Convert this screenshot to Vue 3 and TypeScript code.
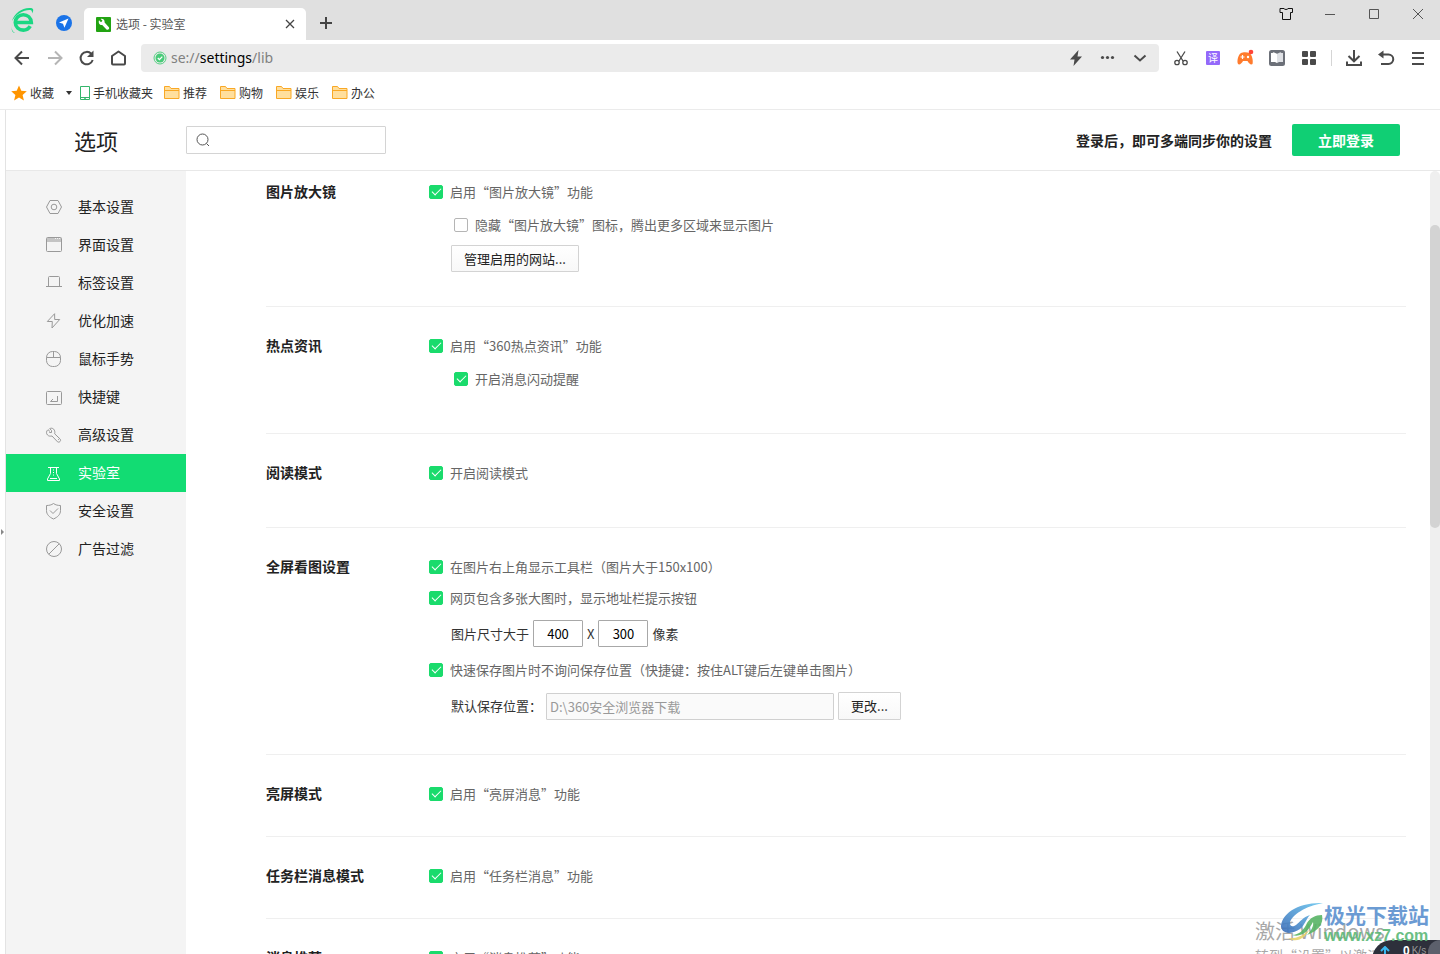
<script setup lang="ts">
import { ref } from 'vue'

interface NavItem {
  label: string
  d: string
  band?: string
}

const bookmarks = ['推荐', '购物', '娱乐', '办公']

const navItems: NavItem[] = [
  { label: '基本设置', d: 'M1.5 9 5 2.5h8L16.5 9 13 15.5H5zM9 6.2a2.8 2.8 0 1 0 0 5.6 2.8 2.8 0 0 0 0-5.6z' },
  { label: '界面设置', d: 'M2.5 1.5h13a1 1 0 0 1 1 1v12a1 1 0 0 1-1 1h-13a1 1 0 0 1-1-1v-12a1 1 0 0 1 1-1z', band: 'M2 2h8v1H2zM11 2h1v1h-1zM13 2h1v1h-1zM15 2h1v1h-1zM2 3h14v3H2z' },
  { label: '标签设置', d: 'M3.5 12V3.5a1 1 0 0 1 1-1h9a1 1 0 0 1 1 1V12M1 12.5h16' },
  { label: '优化加速', d: 'M9.6 1.7 2.3 9.5h5L7 16l7.7-8.5h-5z' },
  { label: '鼠标手势', d: 'M7.5 1.5h2a6 6 0 0 1 6 6v3a6 6 0 0 1-6 6h-2a6 6 0 0 1-6-6v-3a6 6 0 0 1 6-6zM1.5 7.5h14M8.5 1.5v6' },
  { label: '快捷键', d: 'M2.5 3.5h13a1 1 0 0 1 1 1v11a1 1 0 0 1-1 1h-13a1 1 0 0 1-1-1v-11a1 1 0 0 1 1-1zM12.5 8v5.500H5.500l2.500-2.500' },
  { label: '高级设置', d: 'M5 5.500 3 3.700C1.200 5 1 7.500 2.500 9c1.300 1.300 2.800 1.300 4.500 1l5.500 5.800c1.800 1.200 4-1 2.700-2.700L9.700 7.800c.4-1.800 0-3.500-1-4.600-1.200-1.200-2.700-1.200-4-.6L6.500 4.500v2H4.300M13 13.500h.8' },
  { label: '实验室', d: 'M3 3.500h11M5.500 3.500v6L2.500 15v1.500h12V15l-3-5.500v-6M8.500 5.500v1M8.500 8v1M8.500 10.500v1M5 14.500h7' },
  { label: '安全设置', d: 'M8.5 1.5c2 1.500 4.500 2 7 2v5c0 4-2.700 6.500-7 8.500-4.300-2-7-4.500-7-8.500v-5c2.500 0 5-.5 7-2zM5 8.500l3 3 5-5' },
  { label: '广告过滤', d: 'M9 1.500a7.500 7.500 0 1 0 0 15 7.500 7.500 0 0 0 0-15zM3.700 14.300 14.300 3.700' },
]

const activeNav = ref('实验室')
const query = ref('')
const address = ref({ scheme: 'se://', host: 'settings', path: '/lib' })

const magnifier = ref(true)
const hideMagnifier = ref(false)
const hotNews = ref(true)
const flashNews = ref(true)
const readMode = ref(true)
const imageToolbar = ref(true)
const imageHint = ref(true)
const quickSave = ref(true)
const screenMessage = ref(true)
const taskbarMessage = ref(true)
const recommend = ref(true)
const minWidth = ref('400')
const minHeight = ref('300')
const savePath = ref('D:\\360安全浏览器下载')
</script>

<template>
  <div class="browser" lang="zh-CN">
    <header class="titlebar">
      <svg class="logo" viewBox="0 0 26 28" aria-hidden="true">
        <path d="M5.500 15.500H21.300C21 10.500 17.500 7.700 13.300 7.700c-4.500 0-8 3.400-8 7.800s3.500 7.600 8 7.600c3 0 5.500-1.500 6.900-4" fill="none" stroke="#1bd783" stroke-width="3.600" />
        <path d="M2 14C4 6 13 0 21 1c3 .5 2.600 3 1 5.500.3-2-.3-3.300-2-3.500C14 2.600 6 7 2 14zM2.500 17c-1.500 4-.5 7.500 2.500 9C2 25.700.8 22.500 2.500 17z" fill="#1bd783" />
      </svg>
      <button class="pinned" aria-label="导航">
        <svg viewBox="0 0 16 16"><circle cx="8" cy="8" r="8" fill="#1a73e8" /><path d="M12.500 3.500 3 7.600l4 1.200 1.400 4z" fill="#fff" /></svg>
      </button>
      <div class="tab">
        <svg class="favicon" viewBox="0 0 15 15" aria-hidden="true">
          <rect width="15" height="15" rx="1" fill="#22a312" />
          <path d="M3 3.200 5 5.200l1.500-1.400L4.700 2C7 1.400 9 3 8.600 5.600l4.300 4.600c1 1.500-1 3.300-2.400 2.300L6.200 8C4 8.500 2 6 3 3.200z" fill="#fff" />
        </svg>
        <span class="tab-title">选项 - 实验室</span>
        <button class="tab-close" aria-label="关闭标签页">
          <svg viewBox="0 0 10 10"><path d="m1 1 8 8M9 1 1 9" /></svg>
        </button>
      </div>
      <button class="new-tab" aria-label="新建标签页">
        <svg viewBox="0 0 12 12"><path d="M6 0v12M0 6h12" /></svg>
      </button>
      <div class="window-buttons">
        <button aria-label="皮肤"><svg class="dark" viewBox="0 0 16 16"><path d="M2 2.500h4c.5 1.300 3.500 1.300 4 0h4.500v4H12.500v7h-8v-7H2z" /></svg></button>
        <button aria-label="最小化"><svg viewBox="0 0 16 16"><path d="M3 8.500h10" /></svg></button>
        <button aria-label="最大化"><svg viewBox="0 0 16 16"><path d="M3.500 3.500h9v9h-9z" /></svg></button>
        <button aria-label="关闭"><svg viewBox="0 0 16 16"><path d="m3 3 10 10M13 3 3 13" /></svg></button>
      </div>
    </header>

    <div class="toolbar">
      <button class="tool" aria-label="后退"><svg viewBox="0 0 18 18"><path d="M16 9H3M9 2.500 2.500 9 9 15.500" /></svg></button>
      <button class="tool faded" aria-label="前进"><svg viewBox="0 0 18 18"><path d="M3 9h13M10 2.500 16.500 9 10 15.500" /></svg></button>
      <button class="tool" aria-label="刷新"><svg viewBox="0 0 18 18"><path d="M15.700 11A6.200 6.200 0 1 1 14.300 4.800" /><path class="solid" d="M16.500 1.500v6.500H10z" /></svg></button>
      <button class="tool" aria-label="主页"><svg viewBox="0 0 18 18"><path d="M4 15.500q-1 0-1-1V7L9.500 2.500 16 7v7.500q0 1-1 1z" stroke-linejoin="round" /></svg></button>
      <div class="address">
        <svg class="shield" viewBox="0 0 14 14" aria-hidden="true">
          <circle cx="7" cy="7" r="6" fill="none" stroke="#56cf83" stroke-width="1" />
          <circle cx="7" cy="7" r="4.500" fill="#49cc79" />
          <path d="m4.800 7 1.600 1.600 2.900-3" fill="none" stroke="#fff" stroke-width="1.300" />
        </svg>
        <span class="url">{{ address.scheme }}<b>{{ address.host }}</b>{{ address.path }}</span>
        <button class="tool" aria-label="极速模式"><svg viewBox="0 0 18 18"><path class="solid" d="M11.500 1 3 10.500h4.500L6.500 17 15 7.500h-4.500z" /></svg></button>
        <button class="tool" aria-label="更多"><svg viewBox="0 0 18 18"><circle class="solid" cx="3.500" cy="8.500" r="1.600" /><circle class="solid" cx="8.500" cy="8.500" r="1.600" /><circle class="solid" cx="13.500" cy="8.500" r="1.600" /></svg></button>
        <button class="tool" aria-label="展开"><svg viewBox="0 0 18 18"><path d="m3.500 6.500 5.500 5 5.500-5" /></svg></button>
      </div>
      <button class="tool" aria-label="截图"><svg class="thin" viewBox="0 0 18 18"><path d="m5 2.500 6 9.500M13 2.500 7 12" /><circle cx="5" cy="13.500" r="2.200" /><circle cx="13" cy="13.500" r="2.200" /></svg></button>
      <button class="tool" aria-label="翻译"><span class="translate">译</span></button>
      <button class="tool" aria-label="游戏">
        <svg viewBox="0 0 18 18"><path d="M5 4c2-1 6-1 8.500 0 2.500 1.500 4 8 3 11-1.500 1.500-4-1-5-3H7c-1 2-3.500 4.500-5 3C.5 12 2.500 5 5 4z" fill="#ff7b2d" stroke="none" /><path d="M6.500 6v4M4.500 8h4" stroke="#fff" stroke-width="1.200" /><circle cx="12" cy="8" r="1.200" fill="#fff" stroke="none" /><circle cx="15" cy="3" r="2.300" fill="#ff4438" stroke="none" /></svg>
      </button>
      <button class="tool" aria-label="阅读">
        <svg viewBox="0 0 18 18"><rect x="1" y="1" width="16" height="16" rx="2.500" fill="#6c7078" stroke="none" /><path d="M3 4h1.500l1-.8L9 4.800V14l-2-1H3z" fill="#fff" stroke="none" /><path d="M15 4h-1.500l-1-.8L9 4.800V14l2-1h4z" fill="#dfe1e5" stroke="none" /></svg>
      </button>
      <button class="tool" aria-label="扩展"><svg viewBox="0 0 18 18"><path class="solid" d="M3 2h4a1 1 0 0 1 1 1v4a1 1 0 0 1-1 1H3a1 1 0 0 1-1-1V3a1 1 0 0 1 1-1zM11 2h4a1 1 0 0 1 1 1v4a1 1 0 0 1-1 1h-4a1 1 0 0 1-1-1V3a1 1 0 0 1 1-1zM3 10h4a1 1 0 0 1 1 1v4a1 1 0 0 1-1 1H3a1 1 0 0 1-1-1v-4a1 1 0 0 1 1-1zM11 10h4a1 1 0 0 1 1 1v4a1 1 0 0 1-1 1h-4a1 1 0 0 1-1-1v-4a1 1 0 0 1 1-1z" /></svg></button>
      <span class="divider"></span>
      <button class="tool" aria-label="下载"><svg viewBox="0 0 18 18"><path d="M9 1v11M3.500 7 9 12.300 14.500 7M2 12.500V16h14v-3.500" /></svg></button>
      <button class="tool" aria-label="恢复"><svg viewBox="0 0 18 18"><path d="M3 5.500h8.500a4.700 4.700 0 0 1 0 9.500H4" /><path class="solid" d="M6.500 1.500v8L1 5.500z" /></svg></button>
      <button class="tool" aria-label="菜单"><svg viewBox="0 0 18 18"><path d="M3 4h12M3 9h12M3 15h12" /></svg></button>
    </div>

    <nav class="bookmarks" aria-label="收藏栏">
      <a class="bookmark" href="#">
        <svg viewBox="0 0 16 16"><path d="m8 .5 2.300 5.200 5.500.6-4.200 3.700 1.300 5.500L8 12.600l-4.900 2.900L4.400 10 .2 6.300l5.500-.6z" fill="#ff9500" /></svg>收藏
      </a>
      <button class="caret" aria-label="展开收藏"></button>
      <a class="bookmark phone" href="#">
        <svg viewBox="0 0 12 16"><path d="M1.500 1.500h9v13h-9zM1 12.500h10" fill="none" stroke="#34b66b" /><path d="M5 13.200h2v.8H5z" fill="#34b66b" /></svg>手机收藏夹
      </a>
      <a v-for="name in bookmarks" :key="name" class="bookmark" href="#">
        <svg viewBox="0 0 16 16"><path d="M.5 13.500v-12h5l1.500 2h8v10z" fill="#ffdf9e" stroke="#f9a825" /><path d="M1 5.500h14" stroke="#f9a825" /></svg>{{ name }}
      </a>
    </nav>

    <div class="page">
      <button class="side-handle" aria-label="展开侧栏"><span></span></button>
      <div class="settings">
        <header class="settings-head">
          <h1>选项</h1>
          <label class="search">
            <svg viewBox="0 0 14 14" aria-hidden="true"><circle cx="6.500" cy="6.500" r="5.500" /><path d="m10.500 10.500 2.500 2.500" /></svg>
            <input v-model="query" type="text" aria-label="搜索设置" />
          </label>
          <p class="sync">登录后，即可多端同步你的设置</p>
          <button class="login">立即登录</button>
        </header>

        <div class="settings-body">
          <nav class="sidebar" aria-label="设置分类">
            <a v-for="item in navItems" :key="item.label" href="#" :class="{ active: item.label === activeNav }" @click.prevent="activeNav = item.label">
              <svg viewBox="0 0 18 18" aria-hidden="true"><path v-if="item.band" class="band" :d="item.band" /><path :d="item.d" /></svg>
              <span>{{ item.label }}</span>
            </a>
          </nav>

          <main class="content">
            <section class="scrolled">
              <h2>图片放大镜</h2>
              <div class="options">
                <label class="check"><input v-model="magnifier" type="checkbox" />启用“图片放大镜”功能</label>
                <label class="check nested"><input v-model="hideMagnifier" type="checkbox" />隐藏“图片放大镜”图标，腾出更多区域来显示图片</label>
                <div class="sub close"><button class="plain manage">管理启用的网站...</button></div>
              </div>
            </section>
            <section class="roomy">
              <h2>热点资讯</h2>
              <div class="options">
                <label class="check"><input v-model="hotNews" type="checkbox" />启用“360热点资讯”功能</label>
                <label class="check nested"><input v-model="flashNews" type="checkbox" />开启消息闪动提醒</label>
              </div>
            </section>
            <section class="roomy">
              <h2>阅读模式</h2>
              <div class="options">
                <label class="check"><input v-model="readMode" type="checkbox" />开启阅读模式</label>
              </div>
            </section>
            <section>
              <h2>全屏看图设置</h2>
              <div class="options dense">
                <label class="check"><input v-model="imageToolbar" type="checkbox" />在图片右上角显示工具栏（图片大于150x100）</label>
                <label class="check"><input v-model="imageHint" type="checkbox" />网页包含多张大图时，显示地址栏提示按钮</label>
                <div class="sub">
                  <label for="min-width">图片尺寸大于</label>
                  <input id="min-width" v-model="minWidth" class="size" type="text" />
                  <label for="min-height">X</label>
                  <input id="min-height" v-model="minHeight" class="size" type="text" aria-label="高度" />
                  <span>像素</span>
                </div>
                <label class="check"><input v-model="quickSave" type="checkbox" />快速保存图片时不询问保存位置（快捷键：按住ALT键后左键单击图片）</label>
                <div class="sub">
                  <label for="save-path">默认保存位置：</label>
                  <input id="save-path" v-model="savePath" class="path" type="text" disabled />
                  <button class="plain change">更改...</button>
                </div>
              </div>
            </section>
            <section>
              <h2>亮屏模式</h2>
              <div class="options">
                <label class="check"><input v-model="screenMessage" type="checkbox" />启用“亮屏消息”功能</label>
              </div>
            </section>
            <section>
              <h2>任务栏消息模式</h2>
              <div class="options">
                <label class="check"><input v-model="taskbarMessage" type="checkbox" />启用“任务栏消息”功能</label>
              </div>
            </section>
            <section>
              <h2>消息推荐</h2>
              <div class="options">
                <label class="check"><input v-model="recommend" type="checkbox" />启用“消息推荐”功能</label>
              </div>
            </section>
          </main>
          <div class="scrollbar"><span></span></div>
        </div>
      </div>
    </div>

    <div class="activation">
      <strong>激活 Windows</strong>
      <span>转到“设置”以激活 Windows。</span>
    </div>
    <div class="netspeed">
      <svg viewBox="0 0 10 10" aria-hidden="true"><path d="M5 10V2M1 5l4-4 4 4" /></svg>
      <b>0</b><span>K/s</span><i></i>
    </div>
    <div class="site-mark">
      <svg viewBox="0 0 44 40" aria-hidden="true">
        <defs>
          <linearGradient id="swirl" x1="0" y1="1" x2="1" y2="0">
            <stop offset="0" stop-color="#3a6cb8" />
            <stop offset="1" stop-color="#6bc8f0" />
          </linearGradient>
        </defs>
        <path d="M1 25C1 12 18 0 43 1 26 4 11 13 10 21c0 4 3 4 6 2 4-3 7-8 14-10-4 4-5 10-10 14-7 5-17 6-19-2z" fill="url(#swirl)" />
        <path d="M12 33c7 0 12-5 15-12 3-5 8-8 15-8 2 9-4 16-15 20 4-4 7-9 6-13-4 8-11 16-21 13z" fill="#58b465" />
        <path d="M8 36c7 1 15-2 21-8-3 7-12 14-21 8z" fill="#e7d36a" />
      </svg>
      <div><strong>极光下载站</strong><span>www.xz7.com</span></div>
    </div>
  </div>
</template>

<style>
html,
body,
#app {
  height: 100%;
}
body {
  margin: 0;
  overflow: hidden;
}
</style>

<style scoped>
* {
  box-sizing: border-box;
}
.browser {
  position: relative;
  display: flex;
  flex-direction: column;
  height: 100vh;
  overflow: hidden;
  background: #fff;
  color: #222;
  font-family: "Noto Sans CJK SC", "Liberation Sans", sans-serif;
  font-size: 13px;
  line-height: 20px;
}
button {
  padding: 0;
  border: 0;
  background: none;
  color: inherit;
  font: inherit;
}
input {
  margin: 0;
  font: inherit;
}
a {
  color: inherit;
  text-decoration: none;
}
svg {
  display: block;
  flex: none;
}
h1,
h2,
p {
  margin: 0;
}

.titlebar {
  display: flex;
  flex: none;
  height: 40px;
  padding-left: 10px;
  background: #e0e0e0;
}
.logo {
  width: 26px;
  height: 28px;
  margin-top: 7px;
}
.pinned {
  width: 16px;
  height: 16px;
  margin: 15px 12px 0 20px;
}
.tab {
  display: flex;
  align-items: center;
  width: 222px;
  margin-top: 8px;
  padding: 0 11px 0 12px;
  border-radius: 5px 5px 0 0;
  background: #fff;
  color: #555;
  font-size: 12px;
}
.favicon {
  width: 15px;
  height: 15px;
}
.tab-title {
  flex: 1;
  margin-left: 5px;
}
.tab-close,
.tab-close svg {
  width: 10px;
  height: 10px;
}
.tab-close path,
.new-tab path {
  fill: none;
  stroke: #444;
  stroke-width: 1.3;
}
.new-tab {
  width: 40px;
  padding-bottom: 5px;
}
.new-tab path {
  stroke-width: 2;
}
.new-tab svg {
  width: 12px;
  height: 12px;
  margin: 10px auto 0;
}
.window-buttons {
  display: flex;
  margin-left: auto;
}
.window-buttons button {
  display: grid;
  place-items: center;
  width: 44px;
  height: 28px;
}
.window-buttons svg {
  width: 16px;
  height: 16px;
  fill: none;
  stroke: #555;
}
.window-buttons .dark {
  stroke: #111;
}

.toolbar {
  display: flex;
  flex: none;
  align-items: center;
  height: 36px;
  padding: 0 6px;
}
.tool {
  display: grid;
  place-items: center;
  flex: none;
  width: 32px;
  height: 28px;
  color: #4a4a4a;
}
.tool svg {
  width: 18px;
  height: 18px;
  fill: none;
  stroke: currentColor;
  stroke-width: 2;
}
.tool .thin {
  stroke-width: 1.3;
}
.tool .solid {
  fill: currentColor;
  stroke: none;
}
.faded {
  color: #b5b5b5;
}
.address {
  display: flex;
  flex: 1;
  align-items: center;
  height: 28px;
  margin: 0 6px 0 7px;
  padding: 0 3px 0 12px;
  border-radius: 4px;
  background: #ebebeb;
}
.shield {
  width: 14px;
  height: 14px;
}
.url {
  flex: 1;
  margin-left: 4px;
  color: #808080;
  font-family: "Noto Sans", sans-serif;
  font-size: 14px;
}
.url b {
  color: #000;
  font-weight: 400;
}
.translate {
  width: 14px;
  height: 14px;
  border-radius: 1px;
  background: #9469fa;
  color: #fff;
  font-size: 10px;
  line-height: 14px;
}
.divider {
  width: 1px;
  height: 16px;
  margin: 0 6px;
  background: #d5d5d5;
}

.bookmarks {
  display: flex;
  flex: none;
  align-items: center;
  gap: 13px;
  height: 34px;
  padding-left: 11px;
  border-bottom: 1px solid #ebebeb;
  color: #333;
  font-size: 12px;
}
.bookmark {
  display: flex;
  align-items: center;
  gap: 3px;
}
.bookmark svg {
  width: 16px;
  height: 16px;
  fill: none;
}
.phone {
  gap: 2px;
  margin: 0 -2px 0 -6px;
}
.phone svg {
  width: 12px;
}
.caret {
  margin-left: -1px;
  border: 3px solid transparent;
  border-top: 4px solid #333;
  border-bottom: 0;
}

.page {
  display: flex;
  flex: 1;
  min-height: 0;
}
.side-handle {
  display: flex;
  align-items: center;
  width: 6px;
  border-right: 1px solid #e3e3e3;
}
.side-handle span {
  margin-left: 1px;
  border: 3px solid transparent;
  border-right: 0;
  border-left: 3px solid #888;
}
.settings {
  display: flex;
  flex: 1;
  flex-direction: column;
  min-width: 0;
}
.settings-head {
  display: flex;
  flex: none;
  align-items: center;
  height: 61px;
  padding-right: 40px;
  border-bottom: 1px solid #e8e8e8;
}
h1 {
  width: 180px;
  font-size: 22px;
  font-weight: 400;
  line-height: 32px;
  text-align: center;
}
.search {
  display: flex;
  align-items: center;
  width: 200px;
  height: 28px;
  padding-left: 9px;
  border: 1px solid #d4d4d4;
  border-radius: 1px;
}
.search svg {
  width: 14px;
  height: 14px;
  fill: none;
  stroke: #555;
}
.search input {
  flex: 1;
  min-width: 0;
  border: 0;
  outline: 0;
  background: none;
}
.sync {
  margin-left: auto;
  font-size: 14px;
  font-weight: 700;
}
.login {
  width: 108px;
  height: 32px;
  margin-left: 20px;
  border-radius: 2px;
  background: #10cf74;
  color: #fff;
  font-size: 14px;
  font-weight: 700;
}

.settings-body {
  display: flex;
  flex: 1;
  min-height: 0;
}
.sidebar {
  flex: none;
  width: 180px;
  padding-top: 17px;
  background: #f4f4f4;
  font-size: 14px;
}
.sidebar a {
  display: flex;
  align-items: center;
  gap: 15px;
  height: 38px;
  padding-left: 39px;
}
.sidebar span {
  padding-bottom: 2px;
}
.sidebar svg {
  width: 18px;
  height: 18px;
  fill: none;
  stroke: #999;
}
.sidebar .band {
  fill: #c4c4c4;
  stroke: none;
}
.sidebar .active {
  background: #12dc73;
  color: #fff;
}
.sidebar .active svg {
  stroke: #fff;
}

.content {
  flex: 1;
  min-width: 0;
  padding: 0 24px 0 80px;
  overflow: hidden;
}
section {
  display: flex;
  padding: 29px 0 32px;
  border-bottom: 1px solid #efefef;
}
.scrolled {
  padding-top: 11px;
}
.roomy {
  padding-bottom: 44px;
}
h2 {
  width: 163px;
  font-size: 14px;
  font-weight: 700;
  line-height: 18px;
}
.options {
  display: flex;
  flex: 1;
  flex-direction: column;
  align-items: flex-start;
  gap: 13px;
}
.dense {
  gap: 11px;
}
.check {
  display: flex;
  align-items: center;
  gap: 7px;
  color: #666;
}
.check input {
  display: grid;
  place-items: center;
  width: 14px;
  height: 14px;
  border: 1px solid #b5b5b5;
  border-radius: 2px;
  background: #fff;
  appearance: none;
}
.check input:checked {
  border-color: #1adb6c;
  background: #1adb6c;
}
.check input:checked::after {
  width: 9px;
  height: 5px;
  margin-bottom: 3px;
  border: solid #fff;
  border-width: 0 0 1px 1px;
  box-sizing: border-box;
  content: "";
  transform: rotate(-45deg);
}
.nested {
  padding-left: 25px;
}
.sub {
  display: flex;
  align-items: center;
  gap: 4px;
  margin: 1px 0 2px;
  padding-left: 22px;
  color: #333;
}
.close {
  margin-top: -3px;
}
.plain {
  height: 27px;
  border: 1px solid #d3d3d3;
  border-radius: 1px;
  background: linear-gradient(#fff, #f8f8f8);
  color: #222;
}
.manage {
  width: 128px;
}
.change {
  width: 63px;
  height: 28px;
}
.size {
  width: 50px;
  height: 27px;
  padding: 0;
  border: 1px solid #a8a8a8;
  border-radius: 1px;
  color: #000;
  text-align: center;
}
.path {
  width: 288px;
  height: 27px;
  padding: 0 3px;
  border: 1px solid #d0d0d0;
  border-radius: 1px;
  background: #fafafa;
  color: #999;
}
.scrollbar {
  width: 10px;
  padding-top: 54px;
  border-radius: 5px 5px 0 0;
  background: #efefef;
}
.scrollbar span {
  display: block;
  height: 303px;
  border-radius: 5px;
  background: #d3d3d3;
}

.activation {
  position: absolute;
  bottom: -12px;
  right: 0;
  width: 185px;
  color: #a8a8a8;
  white-space: nowrap;
  pointer-events: none;
}
.activation strong {
  display: block;
  font-size: 20px;
  font-weight: 400;
  line-height: 28px;
}
.activation span {
  font-size: 14px;
}
.netspeed {
  position: absolute;
  right: 0;
  bottom: -8px;
  display: flex;
  align-items: center;
  gap: 2px;
  width: 68px;
  height: 22px;
  padding-left: 8px;
  border-radius: 20px 0 0 0;
  background: #2d303b;
  color: #999;
  font-family: "Liberation Sans", sans-serif;
  font-size: 10px;
}
.netspeed svg {
  width: 10px;
  height: 10px;
  fill: none;
  stroke: #39b8f1;
  stroke-width: 2;
}
.netspeed b {
  margin-left: 11px;
  color: #fff;
  font-size: 12px;
}
.netspeed i {
  flex: 1;
  align-self: stretch;
  border-radius: 12px 0 0 0;
  background: #5c606c;
}
.site-mark {
  position: absolute;
  right: 11px;
  bottom: 8px;
  display: flex;
  color: #5b91cf;
  opacity: 0.9;
  pointer-events: none;
}
.site-mark svg {
  width: 44px;
  height: 40px;
}
.site-mark strong,
.site-mark span {
  display: block;
}
.site-mark strong {
  font-size: 21px;
  line-height: 24px;
}
.site-mark span {
  color: #5cb977;
  font-family: "Liberation Sans", sans-serif;
  font-size: 16px;
  font-weight: 700;
  line-height: 20px;
}
</style>
